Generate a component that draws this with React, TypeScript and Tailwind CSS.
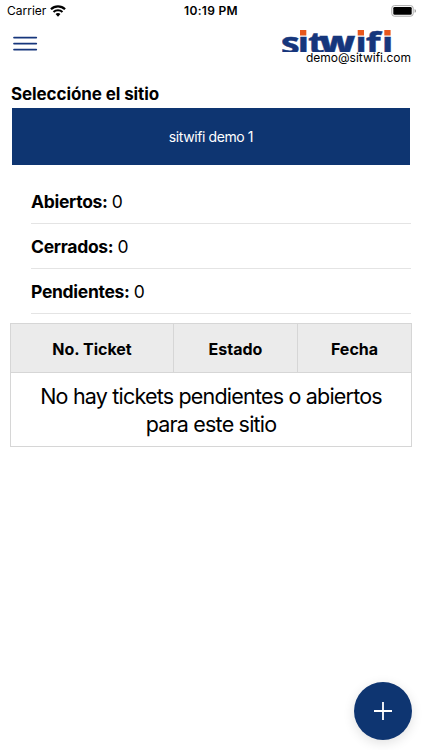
const rows = [
  { label: "Abiertos:", value: 0 },
  { label: "Cerrados:", value: 0 },
  { label: "Pendientes:", value: 0 },
];

function StatusBar() {
  return (
    <div className="grid h-[22px] grid-cols-3 items-center">
      <div className="flex items-center gap-[4px] pl-[7px]">
        <span className="text-[12px] leading-4">Carrier</span>
        <svg width="16" height="12" viewBox="0 0 15 11" fill="none" stroke="#000">
          <path d="M0.9 3.9 C4.5 0.3 10.5 0.3 14.1 3.9" strokeWidth="2.1" />
          <path d="M3.3 6.4 C5.6 4.2 9.4 4.2 11.7 6.4" strokeWidth="2" />
          <path d="M5.2 8.4 Q7.5 6.5 9.8 8.4 L7.5 10.8Z" fill="#000" stroke="none" />
        </svg>
      </div>
      <span className="text-center text-[12px] font-semibold leading-4 tracking-[0.3px]">10:19 PM</span>
      <div className="flex justify-end pr-[5px]">
        <svg width="26" height="12" viewBox="0 0 26 12">
          <rect x="0.8" y="0.6" width="21.4" height="10.6" rx="2.6" fill="#fff" stroke="#aaa" />
          <rect x="2.3" y="2" width="18.4" height="7.8" rx="1.3" />
          <path d="M23.6 4 Q25 4.4 25 5.9 Q25 7.4 23.6 7.8Z" fill="#999" />
        </svg>
      </div>
    </div>
  );
}

function Logo() {
  return (
    <svg className="block" width="110" height="23" viewBox="0 0 110 23">
      <text
        transform="scale(1.28 1)"
        x="-0.9 12.1 20.3 29.1 57.2 65.4 78"
        y="25"
        fontSize="30"
        fontWeight="700"
        fill="#16367c"
        stroke="#16367c"
        strokeWidth="0.4"
        fontFamily="'Open Sans', sans-serif"
      >
        sıt<tspan fontWeight="800" fontSize="31">w</tspan>ıfı
      </text>
      <g fill="#e8571c">
        <rect x="18" y="1" width="6.3" height="5.5" />
        <rect x="75.7" y="1" width="6.3" height="5.5" />
        <rect x="102.3" y="1" width="6.3" height="5.5" />
      </g>
    </svg>
  );
}

export default function App() {
  return (
    <div className="flex h-[750px] w-[422px] flex-col bg-white font-['Inter',sans-serif] text-black">
      <StatusBar />
      <header className="flex h-[61px] justify-between pl-[13px] pr-[11px] pt-[7px]">
        <svg className="mt-[7px]" width="25" height="16" viewBox="0 0 25 16" stroke="#16367c" strokeWidth="1.7" strokeLinecap="round">
          <path d="M1 1.6H23.3M1 7.6H23.3M1 13.6H23.3" />
        </svg>
        <div className="flex w-[129px] flex-col">
          <Logo />
          <span className="-mt-[1px] self-end whitespace-nowrap text-[12px] leading-[14px]">demo@sitwifi.com</span>
        </div>
      </header>
      <h1 className="h-[25px] pl-[11px] text-[17px] font-bold leading-[22px] tracking-[-0.1px]">Seleccióne el sitio</h1>
      <button className="ml-[12px] h-[57px] w-[398px] bg-[#0e3571] text-[14px] tracking-[-0.4px] text-white">sitwifi demo 1</button>
      <ul className="ml-[31px] mr-[11px] mt-[14px]">
        {rows.map((row) => (
          <li key={row.label} className="flex h-[45px] items-center border-b border-[#e4e4e4] pt-[2px] text-[17.5px] tracking-[-0.3px]">
            <strong className="mr-[4px] font-bold">{row.label}</strong>
            {row.value}
          </li>
        ))}
      </ul>
      <table className="ml-[10px] mt-[9px] w-[402px] table-fixed border-collapse text-center">
        <colgroup>
          <col className="w-[163px]" />
          <col className="w-[124px]" />
          <col className="w-[114px]" />
        </colgroup>
        <thead>
          <tr className="h-[49px] bg-[#ebebeb] text-[16px] tracking-[0px]">
            <th className="border border-[#d6d6d6] pt-[2px] font-bold">No. Ticket</th>
            <th className="border border-[#d6d6d6] pt-[2px] font-bold">Estado</th>
            <th className="border border-[#d6d6d6] pt-[2px] font-bold">Fecha</th>
          </tr>
        </thead>
        <tbody>
          <tr className="h-[74px]">
            <td colSpan={3} className="border border-[#d6d6d6] pt-[2px] text-[21.5px] leading-[27.5px] tracking-[-0.8px]">
              No hay tickets pendientes o abiertos
              <br />
              para este sitio
            </td>
          </tr>
        </tbody>
      </table>
      <button className="mb-[10px] ml-auto mr-[10px] mt-auto flex size-[58px] items-center justify-center rounded-full bg-[#0e3571] shadow-[0_3px_12px_rgba(0,0,0,0.12)]">
        <svg width="20" height="20" viewBox="0 0 20 20" stroke="#fff" strokeWidth="1.8">
          <path d="M1 10H19M10 1V19" />
        </svg>
      </button>
    </div>
  );
}
